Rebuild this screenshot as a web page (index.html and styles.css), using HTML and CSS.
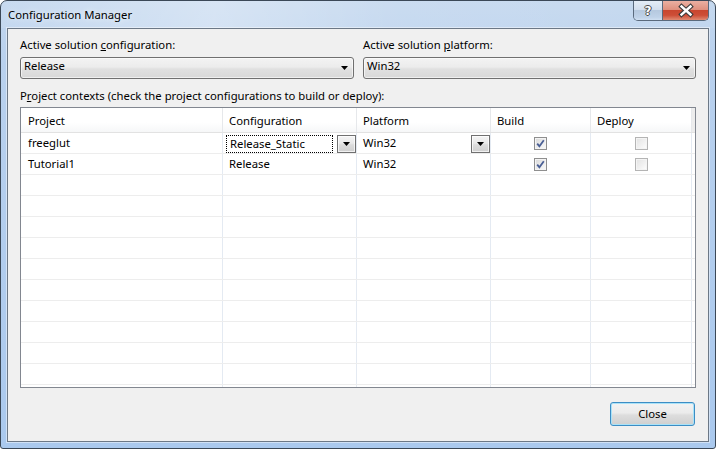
FILE: index.html
```html
<!DOCTYPE html>
<html>
<head>
<meta charset="utf-8">
<title>Configuration Manager</title>
<link rel="stylesheet" href="styles.css">
</head>
<body>
<div class="window">
  <div class="titlebar">
    <span class="title">Configuration Manager</span>
    <div class="caption">
      <div class="cap-btn help"><span class="help-glyph">?</span></div>
      <div class="cap-btn close">
        <svg width="45" height="19" viewBox="0 0 45 19">
          <path d="M18.5 5.5 L27.5 13.5 M27.5 5.5 L18.5 13.5" stroke="#3b3b3b" stroke-width="4.6" stroke-linecap="square" fill="none"/>
          <path d="M18.5 5.5 L27.5 13.5 M27.5 5.5 L18.5 13.5" stroke="#ffffff" stroke-width="2.4" stroke-linecap="square" fill="none"/>
        </svg>
      </div>
    </div>
  </div>
  <div class="client">
    <div class="top-fields">
      <div class="field">
        <div class="label">Active solution <u>c</u>onfiguration:</div>
        <div class="combo"><span class="combo-text">Release</span><svg class="arrow" width="7" height="4" viewBox="0 0 7 4"><path d="M0 0 H7 L3.5 4 Z" fill="#000"/></svg></div>
      </div>
      <div class="field">
        <div class="label">Active solution <u>p</u>latform:</div>
        <div class="combo"><span class="combo-text">Win32</span><svg class="arrow" width="7" height="4" viewBox="0 0 7 4"><path d="M0 0 H7 L3.5 4 Z" fill="#000"/></svg></div>
      </div>
    </div>
    <div class="section-label">P<u>r</u>oject contexts (check the project configurations to build or deploy):</div>
    <div class="grid">
      <div class="row header">
        <div class="cell first">Project</div>
        <div class="cell">Configuration</div>
        <div class="cell">Platform</div>
        <div class="cell">Build</div>
        <div class="cell">Deploy</div>
        <div class="cell filler"></div>
      </div>
      <div class="row">
        <div class="cell first">freeglut</div>
        <div class="cell editor-cell">
          <div class="focus-box">Release_Static</div>
          <div class="drop-btn"><svg width="7" height="4" viewBox="0 0 7 4"><path d="M0 0 H7 L3.5 4 Z" fill="#000"/></svg></div>
        </div>
        <div class="cell editor-cell plain">
          <div class="plain-text">Win32</div>
          <div class="drop-btn"><svg width="7" height="4" viewBox="0 0 7 4"><path d="M0 0 H7 L3.5 4 Z" fill="#000"/></svg></div>
        </div>
        <div class="cell check-cell"><span class="checkbox checked"><svg width="11" height="11" viewBox="0 0 11 11"><path d="M2.2 5.6 L4.4 8.2 L8.8 2.2" stroke="#4a5f95" stroke-width="1.8" fill="none"/></svg></span></div>
        <div class="cell check-cell"><span class="checkbox"></span></div>
        <div class="cell filler"></div>
      </div>
      <div class="row">
        <div class="cell first">Tutorial1</div>
        <div class="cell">Release</div>
        <div class="cell">Win32</div>
        <div class="cell check-cell"><span class="checkbox checked"><svg width="11" height="11" viewBox="0 0 11 11"><path d="M2.2 5.6 L4.4 8.2 L8.8 2.2" stroke="#4a5f95" stroke-width="1.8" fill="none"/></svg></span></div>
        <div class="cell check-cell"><span class="checkbox"></span></div>
        <div class="cell filler"></div>
      </div>
      <div class="row"><div class="cell first"></div><div class="cell"></div><div class="cell"></div><div class="cell"></div><div class="cell"></div><div class="cell filler"></div></div>
      <div class="row"><div class="cell first"></div><div class="cell"></div><div class="cell"></div><div class="cell"></div><div class="cell"></div><div class="cell filler"></div></div>
      <div class="row"><div class="cell first"></div><div class="cell"></div><div class="cell"></div><div class="cell"></div><div class="cell"></div><div class="cell filler"></div></div>
      <div class="row"><div class="cell first"></div><div class="cell"></div><div class="cell"></div><div class="cell"></div><div class="cell"></div><div class="cell filler"></div></div>
      <div class="row"><div class="cell first"></div><div class="cell"></div><div class="cell"></div><div class="cell"></div><div class="cell"></div><div class="cell filler"></div></div>
      <div class="row"><div class="cell first"></div><div class="cell"></div><div class="cell"></div><div class="cell"></div><div class="cell"></div><div class="cell filler"></div></div>
      <div class="row"><div class="cell first"></div><div class="cell"></div><div class="cell"></div><div class="cell"></div><div class="cell"></div><div class="cell filler"></div></div>
      <div class="row"><div class="cell first"></div><div class="cell"></div><div class="cell"></div><div class="cell"></div><div class="cell"></div><div class="cell filler"></div></div>
      <div class="row"><div class="cell first"></div><div class="cell"></div><div class="cell"></div><div class="cell"></div><div class="cell"></div><div class="cell filler"></div></div>
      <div class="row"><div class="cell first"></div><div class="cell"></div><div class="cell"></div><div class="cell"></div><div class="cell"></div><div class="cell filler"></div></div>
      <div class="row"><div class="cell first"></div><div class="cell"></div><div class="cell"></div><div class="cell"></div><div class="cell"></div><div class="cell filler"></div></div>
    </div>
    <div class="actions">
      <button class="btn">Close</button>
    </div>
  </div>
</div>
</body>
</html>
```

FILE: styles.css
```css
html, body {
  margin: 0;
  padding: 0;
  background: #ffffff;
}

body {
  font-family: "Segoe UI", "Noto Sans", sans-serif;
  font-size: 11.3px;
  line-height: 16px;
  color: #000;
}

.window {
  width: 716px;
  height: 449px;
  box-sizing: border-box;
  border: 1px solid #3b4857;
  border-radius: 7px 7px 3px 3px;
  background: linear-gradient(180deg, #c3d7ee 0px, #b9d1ee 60px, #aac9ee 100%);
  display: flex;
  flex-direction: column;
  overflow: hidden;
}

.titlebar {
  flex: none;
  height: 27px;
  display: flex;
  align-items: flex-start;
  padding: 0 6px 0 7px;
  background: linear-gradient(100deg, rgba(255,255,255,0.08) 0%, rgba(255,255,255,0.35) 30%, rgba(255,255,255,0.12) 55%, rgba(255,255,255,0.05) 100%);
}

.title {
  margin-top: 6px;
  color: #000;
  text-shadow: 0 0 6px rgba(255,255,255,0.9);
}

.caption {
  margin-left: auto;
  display: flex;
  height: 19px;
  border: 1px solid #5a6a7d;
  border-top: none;
  border-radius: 0 0 5px 5px;
  overflow: hidden;
}

.cap-btn {
  height: 19px;
  display: flex;
  align-items: center;
  justify-content: center;
}

.help {
  width: 28px;
  background: linear-gradient(180deg, #e4edf7 0%, #d3dfee 45%, #b6c9df 50%, #bfd2e8 85%, #d0e0f2 100%);
}

.help-glyph {
  font-family: "DejaVu Sans", sans-serif;
  font-weight: bold;
  font-size: 12px;
  line-height: 12px;
  color: #ffffff;
  text-shadow: 1px 0 0 #4a4a4a, -1px 0 0 #4a4a4a, 0 1px 0 #4a4a4a, 0 -1px 0 #4a4a4a;
  margin-top: 1px;
}

.close {
  width: 45px;
  border-left: 1px solid #5a6a7d;
  background: linear-gradient(180deg, #eab0a2 0%, #df917f 45%, #c9462f 50%, #cd4e37 75%, #e08a72 100%);
}

.close svg {
  display: block;
}

.client {
  flex: 1;
  margin: 0 6px 6px 6px;
  border: 1px solid #6c7886;
  box-shadow: 0 0 0 1px rgba(255,255,255,0.45);
  background: #f0f0f0;
  padding: 8px 12px 0 12px;
  display: flex;
  flex-direction: column;
}

.top-fields {
  display: grid;
  grid-template-columns: 334px 333px;
  column-gap: 9px;
}

.label {
  margin-bottom: 4px;
  white-space: nowrap;
}

.combo {
  height: 22px;
  box-sizing: border-box;
  border: 1px solid #707070;
  border-radius: 3px;
  background: linear-gradient(180deg, #f3f3f3 0%, #ececec 45%, #e0e0e0 55%, #d8d8d8 100%);
  box-shadow: inset 0 0 0 1px rgba(255,255,255,0.6);
  display: flex;
  align-items: flex-start;
  padding-left: 3px;
}

.combo-text {
  line-height: 16px;
}

.combo .arrow {
  margin-left: auto;
  margin-right: 5px;
  align-self: center;
  display: block;
}

.section-label {
  margin-top: 9px;
  margin-bottom: 3px;
  white-space: nowrap;
}

.grid {
  height: 281px;
  box-sizing: border-box;
  border: 1px solid #828790;
  background: #ffffff;
  overflow: hidden;
  flex: none;
}

.row {
  display: grid;
  grid-template-columns: 202px 134px 134px 100px 101px 1fr;
  height: 21px;
  box-sizing: border-box;
  border-bottom: 1px solid #ededed;
}

.row.header {
  height: 25px;
  border-bottom: 1px solid #e2e2e2;
  background: linear-gradient(180deg, #ffffff 0%, #ffffff 60%, #f6f7f8 100%);
}

.cell {
  border-right: 1px solid #e4eaf2;
  padding: 2px 6px 0 6px;
  white-space: nowrap;
  overflow: hidden;
  min-width: 0;
}

.header .cell {
  padding-top: 5px;
  border-right: 1px solid #e6e8eb;
}

.cell.first {
  padding-left: 7px;
}

.cell.filler {
  border-right: none;
  padding: 0;
}

.header .cell.filler {
  background: #ededed;
  border-right: none;
}

.editor-cell {
  display: flex;
  align-items: flex-start;
  padding: 2px 0 0 3px;
  column-gap: 4px;
}

.editor-cell.plain {
  padding-left: 6px;
}

.focus-box {
  flex: 1;
  height: 18px;
  box-sizing: border-box;
  border: 1px dotted #000000;
  padding-left: 3px;
  line-height: 16px;
  overflow: hidden;
}

.plain-text {
  flex: 1;
}

.drop-btn {
  width: 19px;
  height: 18px;
  box-sizing: border-box;
  border: 1px solid #707070;
  background: linear-gradient(180deg, #f4f4f4 0%, #e9e9e9 45%, #dcdcdc 55%, #cfcfcf 100%);
  box-shadow: inset 0 0 0 1px rgba(255,255,255,0.7);
  display: flex;
  align-items: center;
  justify-content: center;
  flex: none;
}

.drop-btn svg {
  display: block;
}

.check-cell {
  display: flex;
  justify-content: center;
  align-items: flex-start;
  padding: 4px 0 0 0;
}

.checkbox {
  width: 13px;
  height: 13px;
  box-sizing: border-box;
  border: 1px solid #b4b4b4;
  background: linear-gradient(135deg, #e2e2e2 0%, #f2f2f2 60%, #ffffff 100%);
  box-shadow: inset 0 0 0 1px #f4f4f4;
  display: block;
  position: relative;
}

.checkbox.checked {
  border-color: #8f8f8f;
  background: linear-gradient(135deg, #d8d8d8 0%, #eeeeee 60%, #fafafa 100%);
}

.checkbox svg {
  display: block;
}

.actions {
  display: flex;
  justify-content: flex-end;
  margin-top: 14px;
  padding-right: 1px;
}

.btn {
  width: 85px;
  height: 24px;
  box-sizing: border-box;
  font-family: "Segoe UI", "Noto Sans", sans-serif;
  font-size: 11.3px;
  line-height: 16px;
  color: #000;
  border: 1px solid #3c8dc4;
  border-radius: 3px;
  background: linear-gradient(180deg, #f3f3f3 0%, #ebebeb 45%, #dddddd 55%, #cfcfcf 100%);
  box-shadow: inset 0 0 0 1px #a9e2f8;
  padding: 0;
  margin: 0;
}
```
